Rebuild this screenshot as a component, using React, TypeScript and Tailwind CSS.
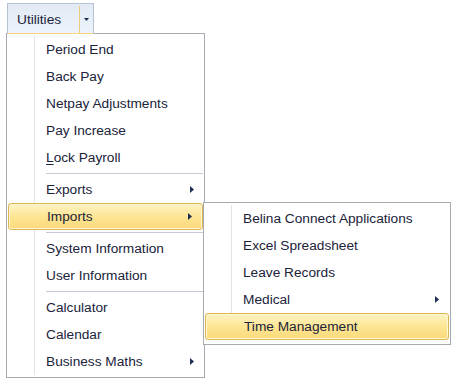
import React from 'react';

type Item = { label: string; sep?: boolean; arrow?: boolean; hl?: boolean; ul?: boolean };

const mainItems: Item[] = [
    { label: 'Period End' },
    { label: 'Back Pay' },
    { label: 'Netpay Adjustments' },
    { label: 'Pay Increase' },
    { label: 'Lock Payroll', ul: true },
    { label: '', sep: true },
    { label: 'Exports', arrow: true },
    { label: 'Imports', arrow: true, hl: true },
    { label: '', sep: true },
    { label: 'System Information' },
    { label: 'User Information' },
    { label: '', sep: true },
    { label: 'Calculator' },
    { label: 'Calendar' },
    { label: 'Business Maths', arrow: true },
];

const subItems: Item[] = [
    { label: 'Belina Connect Applications' },
    { label: 'Excel Spreadsheet' },
    { label: 'Leave Records' },
    { label: 'Medical', arrow: true },
    { label: 'Time Management', hl: true },
];

const Arrow = () => (
    <svg width="4" height="7" viewBox="0 0 4 7" className="shrink-0">
        <polygon points="0,0 4,3.5 0,7" fill="#1e2f55" />
    </svg>
);

const Label = ({ item }: { item: Item }) =>
    item.ul ? (
        <span>
            <span className="underline underline-offset-2">L</span>
            {item.label.slice(1)}
        </span>
    ) : (
        <span>{item.label}</span>
    );

const MenuRow = ({ item, pad }: { item: Item; pad: string }) => {
    if (item.sep) {
        return (
            <div className="flex h-[5px]">
                <div className="w-[28px] shrink-0 border-r border-[#e2e3e5]" />
                <div className="flex-1 flex items-center ml-[11px] mr-px">
                    <div className="w-full h-px bg-[#c5ccd7]" />
                </div>
            </div>
        );
    }
    if (item.hl) {
        return (
            <div className="flex items-center h-[27px] mx-px rounded-[3px] border border-[#dcb550] bg-gradient-to-b from-[#fff3c4] via-[#fde593] to-[#fbd97a] shadow-[inset_0_0_0_1px_#fff6d4]">
                <div className="w-[26px] shrink-0" />
                <div className={`flex-1 flex items-center justify-between pl-[12px] ${pad}`}>
                    <Label item={item} />
                    {item.arrow && <Arrow />}
                </div>
            </div>
        );
    }
    return (
        <div className="flex items-center h-[27px]">
            <div className="w-[28px] h-full shrink-0 border-r border-[#e2e3e5]" />
            <div className={`flex-1 flex items-center justify-between pl-[11px] ${pad}`}>
                <Label item={item} />
                {item.arrow && <Arrow />}
            </div>
        </div>
    );
};

export default function App() {
    return (
        <div className="relative w-[457px] h-[390px] bg-white overflow-hidden text-[13.7px] text-[#20233a] leading-none" style={{ fontFamily: '"Liberation Sans", Arial, sans-serif' }}>
            <div className="pt-[3px] pl-[6px]">
                {/* Utilities split button */}
                <div className="relative z-10 ml-px flex h-[31px] w-[87px] border border-b-0 border-[#b7c3d2] bg-gradient-to-b from-[#e2eaf5] to-[#eef3fa]">
                    <div className="flex-1 flex items-center pl-[9px] pt-[2px] border-b border-[#f5d67c]">Utilities</div>
                    <div className="w-px bg-[#efcd78] mt-[2px]" />
                    <div className="w-[13px] flex items-center justify-center pt-[2px] border-b border-[#f5d67c]">
                        <svg width="5" height="3" viewBox="0 0 5 3">
                            <polygon points="0,0 5,0 2.5,3" fill="#1e2f55" />
                        </svg>
                    </div>
                </div>

                {/* main dropdown */}
                <div className="-mt-px w-[199px] border border-[#a6abb2] bg-white pt-[2px] pb-[2px]">
                    {mainItems.map((it, i) => (
                        <MenuRow key={i} item={it} pad="pr-[10px]" />
                    ))}
                </div>
            </div>

            {/* Imports submenu */}
            <div className="absolute left-[203px] top-[202px] z-20 w-[248px] border border-[#a6abb2] bg-white pt-[2px] pb-[4px]">
                {subItems.map((it, i) => (
                    <MenuRow key={i} item={it} pad="pr-[11px]" />
                ))}
            </div>
        </div>
    );
}
